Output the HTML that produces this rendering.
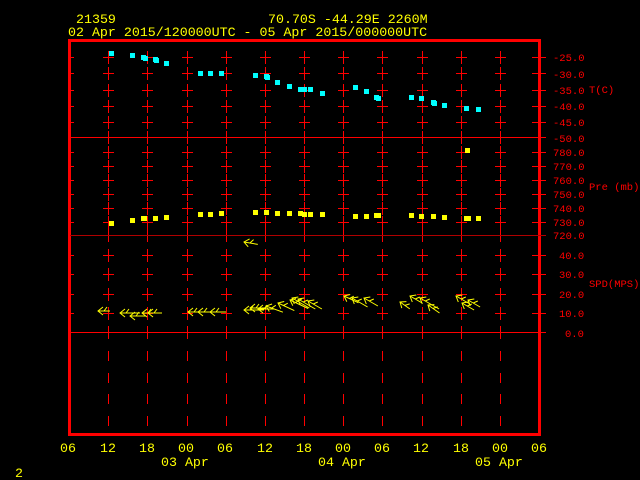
<!DOCTYPE html>
<html><head><meta charset="utf-8"><style>
html,body{margin:0;padding:0;background:#000;width:640px;height:480px;overflow:hidden}
svg{display:block}
text{font-family:"Liberation Mono",monospace;font-size:13.3px}
.r text{font-size:10.5px}
</style></head><body>
<svg id="s" width="640" height="480" xmlns="http://www.w3.org/2000/svg" shape-rendering="crispEdges">
<text x="76" y="23" fill="#ffff00">21359</text>
<text x="268" y="23" fill="#ffff00">70.70S  -44.29E  2260M</text>
<text x="68" y="36" fill="#ffff00">02 Apr 2015/120000UTC - 05 Apr 2015/000000UTC</text>
<g id="g" fill="#ff0000">
<rect x="68" y="39" width="473" height="3"/>
<rect x="68" y="433" width="473" height="3"/>
<rect x="68" y="39" width="3" height="397"/>
<rect x="538" y="39" width="3" height="397"/>
<rect x="70" y="137" width="476" height="1"/>
<rect x="70" y="332" width="476" height="1"/>
</g>
<rect x="70" y="235" width="476" height="1" fill="#b00000"/>
<g id="d"></g>
<g id="w" stroke="#ffff00" stroke-width="1" fill="none" shape-rendering="auto"></g>
<g fill="#ff0000" class="r">
<text x="553" y="61">-25.0</text><text x="553" y="78">-30.0</text><text x="553" y="94">-35.0</text><text x="553" y="110">-40.0</text><text x="553" y="126">-45.0</text><text x="553" y="142">-50.0</text>
<text x="589" y="93">T(C)</text>
<text x="553" y="156">780.0</text><text x="553" y="170">770.0</text><text x="553" y="184">760.0</text><text x="553" y="198">750.0</text><text x="553" y="212">740.0</text><text x="553" y="226">730.0</text><text x="553" y="239">720.0</text>
<text x="589" y="190">Pre (mb)</text>
<text x="559" y="259">40.0</text><text x="559" y="278">30.0</text><text x="559" y="298">20.0</text><text x="559" y="317">10.0</text><text x="565" y="337">0.0</text>
<text x="589" y="287">SPD(MPS)</text>
</g>
<g fill="#ffff00">
<text x="60" y="452">06</text><text x="100" y="452">12</text><text x="139" y="452">18</text><text x="178" y="452">00</text><text x="217" y="452">06</text><text x="257" y="452">12</text><text x="296" y="452">18</text><text x="335" y="452">00</text><text x="374" y="452">06</text><text x="413" y="452">12</text><text x="453" y="452">18</text><text x="492" y="452">00</text><text x="531" y="452">06</text>
<text x="161" y="466">03 Apr</text><text x="318" y="466">04 Apr</text><text x="475" y="466">05 Apr</text>
<text x="15" y="477">2</text>
</g>
</svg>
<script>
var NS="http://www.w3.org/2000/svg";
function el(p,t,a){var e=document.createElementNS(NS,t);for(var k in a)e.setAttribute(k,a[k]);document.getElementById(p).appendChild(e);}
function R(x,y,w,h){el("g","rect",{x:x,y:y,width:w,height:h});}
var cols=[];for(var i=1;i<12;i++)cols.push(69+39.17*i);
var rows=[57,73,90,106,122,152,166,180,194,208,222,255,274,294,313];
cols.forEach(function(x){
 x=Math.round(x);
 rows.forEach(function(y){R(x-5,y,11,1);R(x,y-6,1,13);});
 [137,235,332].forEach(function(y){R(x,y-6,1,13);});
 [351,373,394,416].forEach(function(y){R(x,y,1,10);});
});
[57,73,90,106,122,137,152,166,180,194,208,222,235,255,274,294,313,332].forEach(function(y){R(532,y,14,1);R(70,y,4,1);});
var cy=[[111,53],[132,55],[143,57],[145,58],[155,59],[156,60],[166,63],[200,73],[210,73],[221,73],[255,75],[266,76],[267,77],[277,82],[289,86],[300,89],[304,89],[310,89],[322,93],[355,87],[366,91],[376,97],[378,98],[411,97],[421,98],[433,102],[434,103],[444,105],[466,108],[478,109]];
cy.forEach(function(p){el("d","rect",{x:p[0]-2,y:p[1]-2,width:5,height:5,fill:"#00ffff"});});
var ye=[[111,223],[132,220],[143,218],[144,218],[155,218],[166,217],[200,214],[210,214],[221,213],[255,212],[266,212],[277,213],[289,213],[300,213],[304,214],[310,214],[322,214],[355,216],[366,216],[376,215],[378,215],[411,215],[421,216],[433,216],[444,217],[466,218],[468,218],[478,218],[467,150]];
ye.forEach(function(p){el("d","rect",{x:p[0]-2,y:p[1]-2,width:5,height:5,fill:"#ffff00"});});
var b=[[98,311,0,12],[120,313,0,20],[130,316,0,16],[142,313,0,20],[148,313,0,14],[188,312,0,16],[198,312,0,28],[210,312,0,16],[244,242,10,14],[244,310,0,20],[250,308,0,16],[258,309,0,16],[266,306,20,18],[278,303,25,18],[290,300,25,20],[292,298,30,20],[298,299,30,20],[308,301,30,16],[344,296,25,16],[352,298,30,18],[364,298,30,16],[400,302,35,12],[410,296,30,14],[420,298,30,22],[428,305,35,14],[456,296,30,16],[462,303,30,14],[468,300,30,14]];
b.forEach(function(q){var x=q[0],y=q[1],a=q[2]*Math.PI/180,L=q[3],c=Math.cos(a),s=Math.sin(a);
 function P(u,v){return (x+u*c-v*s).toFixed(1)+","+(y+u*s+v*c).toFixed(1);}
 el("w","polyline",{points:P(L,0)+" "+P(0,0)});
 el("w","polyline",{points:P(5,-4)+" "+P(0,0)+" "+P(5,4)});
 el("w","polyline",{points:P(6,0)+" "+P(9,-4)});
});
</script>
</body></html>
